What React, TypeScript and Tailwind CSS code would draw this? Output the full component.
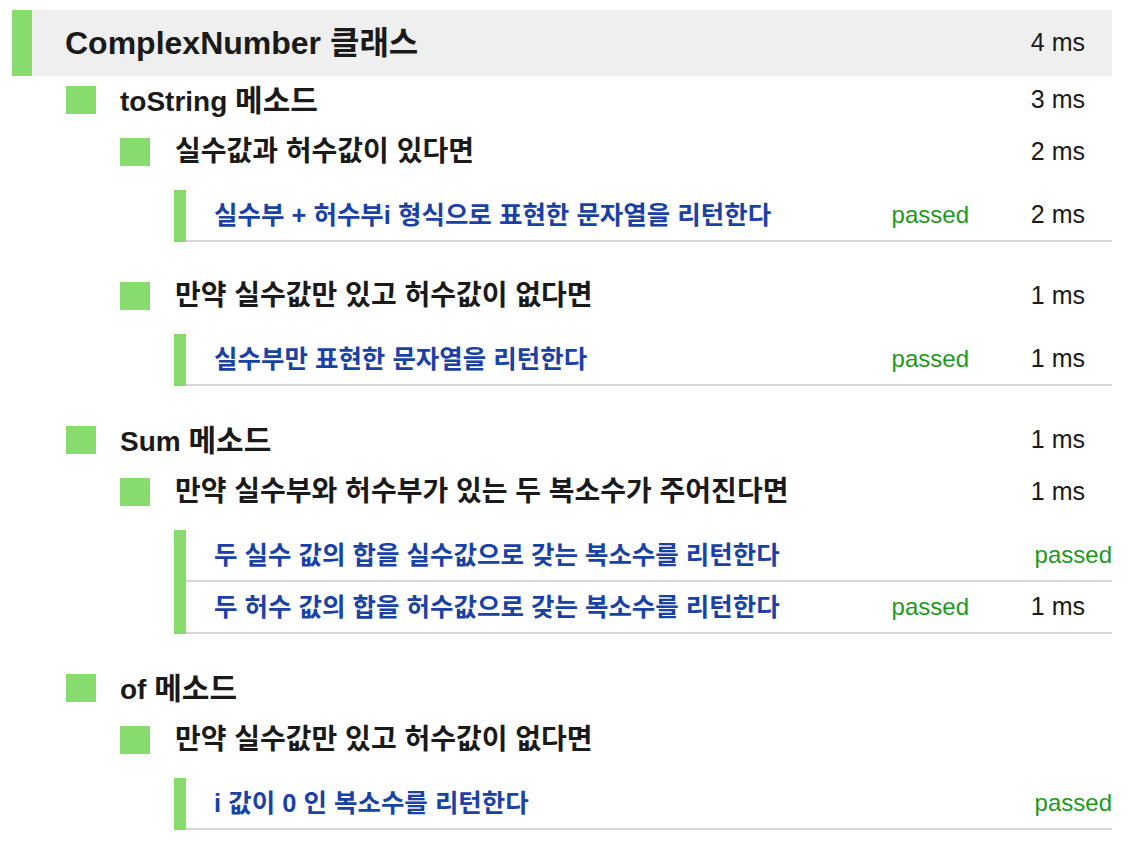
import React from "react";

type Test = { name: string; ms?: string };
type Ctx = { name: string; ms?: string; tests: Test[] };
type Method = { latin: string; ms?: string; contexts: Ctx[] };

const data: Method[] = [
  {
    latin: "toString",
    ms: "3 ms",
    contexts: [
      {
        name: "실수값과 허수값이 있다면",
        ms: "2 ms",
        tests: [{ name: "실수부 + 허수부i 형식으로 표현한 문자열을 리턴한다", ms: "2 ms" }],
      },
      {
        name: "만약 실수값만 있고 허수값이 없다면",
        ms: "1 ms",
        tests: [{ name: "실수부만 표현한 문자열을 리턴한다", ms: "1 ms" }],
      },
    ],
  },
  {
    latin: "Sum",
    ms: "1 ms",
    contexts: [
      {
        name: "만약 실수부와 허수부가 있는 두 복소수가 주어진다면",
        ms: "1 ms",
        tests: [
          { name: "두 실수 값의 합을 실수값으로 갖는 복소수를 리턴한다" },
          { name: "두 허수 값의 합을 허수값으로 갖는 복소수를 리턴한다", ms: "1 ms" },
        ],
      },
    ],
  },
  {
    latin: "of",
    contexts: [
      {
        name: "만약 실수값만 있고 허수값이 없다면",
        tests: [{ name: "i 값이 0 인 복소수를 리턴한다" }],
      },
    ],
  },
];

function Duration({ ms }: { ms?: string }) {
  if (!ms) return null;
  return (
    <span className="w-[143px] shrink-0 pr-[27px] text-right text-[25px] font-normal text-[#1a1a1a]">
      {ms}
    </span>
  );
}

export default function App() {
  return (
    <div
      className="h-[844px] w-[1130px] overflow-hidden bg-white"
      style={{ fontFamily: '"Liberation Sans", "Noto Sans CJK KR", Arial, sans-serif' }}
    >
      <div className="mx-[12px] mt-[10px] w-[1100px]">
        <div className="mb-[-2px] flex h-[66px] items-center bg-[#efefef]">
          <div className="h-full w-[20px] bg-[#88dc6e]" />
          <span className="flex-1 pl-[33px] text-[32px] font-bold text-[#1a1a1a]">
            ComplexNumber 클래스
          </span>
          <Duration ms="4 ms" />
        </div>

        {data.map((m, mi) => (
          <div key={mi}>
            <div className="flex h-[52px] items-center">
              <div className="ml-[54px] h-[28px] w-[30px] bg-[#88dc6e]" />
              <span className="flex-1 pl-[24px] text-[28px] font-bold text-[#1a1a1a]">
                {m.latin} <span className="text-[30px]">메소드</span>
              </span>
              <Duration ms={m.ms} />
            </div>
            {m.contexts.map((c, ci) => (
              <div key={ci}>
                <div className="flex h-[52px] items-center">
                  <div className="ml-[108px] h-[28px] w-[30px] bg-[#88dc6e]" />
                  <span className="flex-1 pl-[25px] text-[28px] font-bold text-[#1a1a1a]">{c.name}</span>
                  <Duration ms={c.ms} />
                </div>
                <div className="mb-[28px] ml-[162px] mt-[12px]">
                  {c.tests.map((t, ti) => (
                    <div key={ti} className="flex h-[52px]">
                      <div className="w-[12px] bg-[#88dc6e]" />
                      <div className="flex flex-1 items-center border-b-2 border-[#d6d6d6]">
                        <span className="flex-1 pl-[28px] text-[25.5px] font-bold text-[#1a42a6]">{t.name}</span>
                        <span className="text-[24px] text-[#1c9a1c]">passed</span>
                        <Duration ms={t.ms} />
                      </div>
                    </div>
                  ))}
                </div>
              </div>
            ))}
          </div>
        ))}
      </div>
    </div>
  );
}
